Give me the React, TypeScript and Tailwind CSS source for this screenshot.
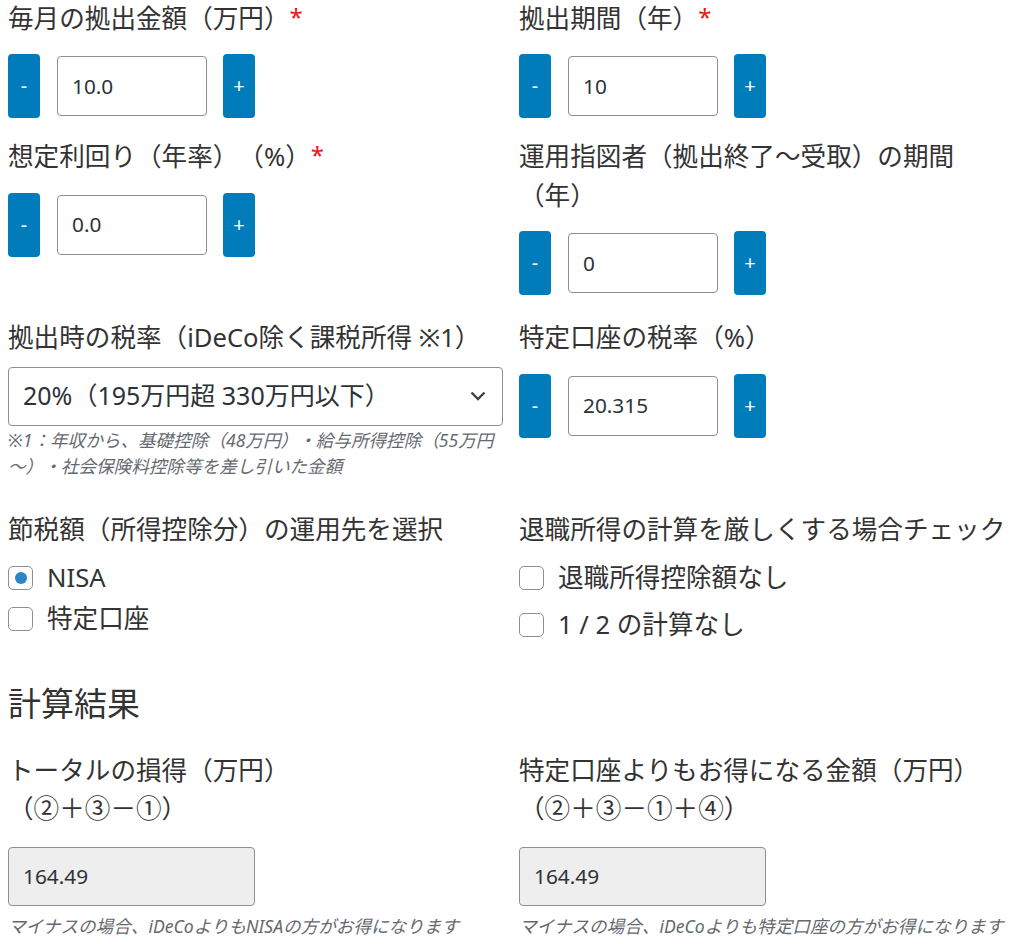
import { useState } from "react";

const font = "font-['Noto_Sans','Noto_Sans_CJK_JP',sans-serif]";

const Stepper = ({ value }: { value: string }) => (
  <div className="flex items-center">
    <button className="w-8 h-16 rounded bg-[#007cba] text-white text-[20px] leading-none flex items-center justify-center">
      -
    </button>
    <div className="ml-[17px] w-[150px] h-[60px] border border-[#8c8f94] rounded bg-white flex items-center pl-[14px] text-[20.8px] text-[#2c3338]">
      {value}
    </div>
    <button className="ml-4 w-8 h-16 rounded bg-[#007cba] text-white text-[20px] leading-none flex items-center justify-center">
      +
    </button>
  </div>
);

const Label = ({ children, req }: { children: React.ReactNode; req?: boolean }) => (
  <p className="text-[25.6px] leading-[38.4px] text-[#333]">
    {children}
    {req && <span className="text-[#e8171b] text-[24px] relative -top-[2px]">*</span>}
  </p>
);

const Box = ({ checked, radio }: { checked?: boolean; radio?: boolean }) => (
  <span className="w-[25px] h-6 border border-[#8c8f94] rounded-[5px] bg-white flex items-center justify-center shrink-0">
    {radio && checked && <span className="w-3 h-3 rounded-full bg-[#2a86c4]"></span>}
  </span>
);

export default function App() {
  const [choice] = useState("NISA");
  return (
    <div className={`${font} [text-spacing-trim:space-all] px-2 bg-white text-[#333]`}>
      <div className="grid grid-cols-[495px_495px] gap-x-4">
        {/* row 1 */}
        <div className="pb-5">
          <Label req>毎月の拠出金額（万円）</Label>
          <div className="mt-4">
            <Stepper value="10.0" />
          </div>
        </div>
        <div className="pb-5">
          <Label req>拠出期間（年）</Label>
          <div className="mt-4">
            <Stepper value="10" />
          </div>
        </div>

        {/* row 2 */}
        <div className="pb-6">
          <Label req>想定利回り（年率）（%）</Label>
          <div className="mt-4">
            <Stepper value="0.0" />
          </div>
        </div>
        <div className="pb-6">
          <Label>運用指図者（拠出終了～受取）の期間（年）</Label>
          <div className="mt-4">
            <Stepper value="0" />
          </div>
        </div>

        {/* row 3 */}
        <div className="pb-8">
          <Label>拠出時の税率（iDeCo除く課税所得 ※1）</Label>
          <div className="mt-[9px] h-[59px] border border-[#8c8f94] rounded bg-white flex items-center justify-between pl-[14px] pr-[16px] text-[25px] text-[#2c3338]">
            <span>20%（195万円超 330万円以下）</span>
            <svg width="16" height="10" viewBox="0 0 16 10" fill="none">
              <path d="M1.5 1.5l6.5 6.5 6.5-6.5" stroke="#3c434a" strokeWidth="2.4" />
            </svg>
          </div>
          <p className="mt-px text-[17.6px] leading-[26.4px] italic text-[#646970]">
            ※1：年収から、基礎控除（48万円）・給与所得控除（55万円～）・社会保険料控除等を差し引いた金額
          </p>
        </div>
        <div className="pb-8">
          <Label>特定口座の税率（%）</Label>
          <div className="mt-4">
            <Stepper value="20.315" />
          </div>
        </div>

        {/* row 4 */}
        <div>
          <Label>節税額（所得控除分）の運用先を選択</Label>
          <div className="mt-2">
            {["NISA", "特定口座"].map((item) => (
              <label key={item} className="h-[41px] flex items-center gap-[14px] text-[25.6px]">
                <Box radio checked={choice === item} />
                <span>{item}</span>
              </label>
            ))}
          </div>
        </div>
        <div>
          <Label>退職所得の計算を厳しくする場合チェック</Label>
          <div className="mt-[5px]">
            {["退職所得控除額なし", "1 / 2 の計算なし"].map((item) => (
              <label key={item} className="h-[47px] flex items-center gap-[14px] text-[25.6px]">
                <Box />
                <span>{item}</span>
              </label>
            ))}
          </div>
        </div>
      </div>

      <h2 className="mt-[35px] text-[33px] leading-[40px] text-[#333]">計算結果</h2>

      <div className="mt-[28px] grid grid-cols-[495px_495px] gap-x-4">
        {[
          { title: "トータルの損得（万円）", formula: "（②＋③－①）", note: "マイナスの場合、iDeCoよりもNISAの方がお得になります" },
          { title: "特定口座よりもお得になる金額（万円）", formula: "（②＋③－①＋④）", note: "マイナスの場合、iDeCoよりも特定口座の方がお得になります" },
        ].map((r) => (
          <div key={r.title}>
            <p className="text-[25.6px] leading-[38.4px] text-[#333]">
              {r.title}
              <br />
              {r.formula}
            </p>
            <div className="mt-[18px] w-[247px] h-[59px] border border-[#8c8f94] rounded bg-[#eeeeee] flex items-center pl-[14px] text-[20.8px] text-[#2c3338]">
              164.49
            </div>
            <p className="mt-[7px] text-[17.6px] leading-[26.4px] italic text-[#646970] whitespace-nowrap">{r.note}</p>
          </div>
        ))}
      </div>
    </div>
  );
}
